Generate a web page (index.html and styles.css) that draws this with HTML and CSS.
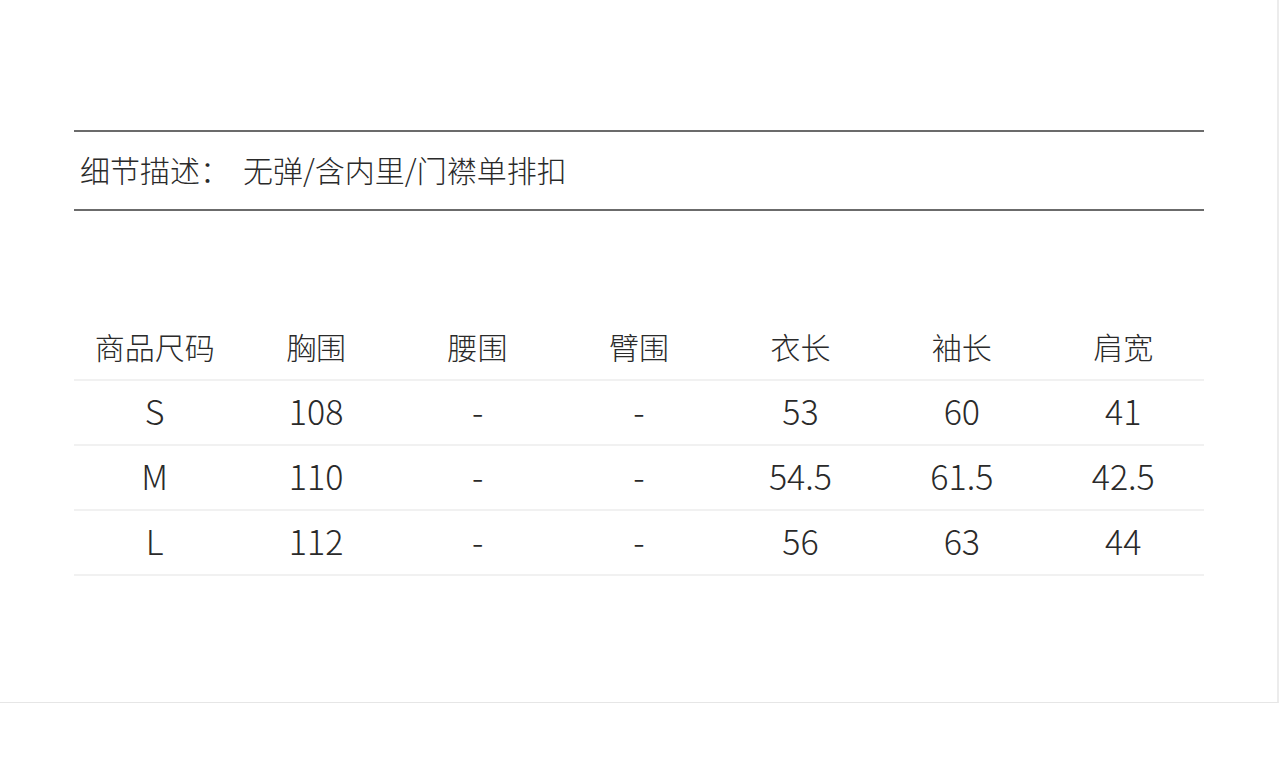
FILE: index.html
```html
<!DOCTYPE html>
<html lang="zh">
<head>
<meta charset="utf-8">
<title>尺码表</title>
<link rel="stylesheet" href="styles.css">
</head>
<body>
<div class="frame">
  <div class="detail">
    <span class="label">细节描述：</span><span class="value">无弹/含内里/门襟单排扣</span>
  </div>
  <div class="table">
    <div class="row head">
      <div class="cell">商品尺码</div>
      <div class="cell">胸围</div>
      <div class="cell">腰围</div>
      <div class="cell">臂围</div>
      <div class="cell">衣长</div>
      <div class="cell">袖长</div>
      <div class="cell">肩宽</div>
    </div>
    <div class="row">
      <div class="cell">S</div>
      <div class="cell">108</div>
      <div class="cell">-</div>
      <div class="cell">-</div>
      <div class="cell">53</div>
      <div class="cell">60</div>
      <div class="cell">41</div>
    </div>
    <div class="row">
      <div class="cell">M</div>
      <div class="cell">110</div>
      <div class="cell">-</div>
      <div class="cell">-</div>
      <div class="cell">54.5</div>
      <div class="cell">61.5</div>
      <div class="cell">42.5</div>
    </div>
    <div class="row">
      <div class="cell">L</div>
      <div class="cell">112</div>
      <div class="cell">-</div>
      <div class="cell">-</div>
      <div class="cell">56</div>
      <div class="cell">63</div>
      <div class="cell">44</div>
    </div>
  </div>
</div>
</body>
</html>
```

FILE: styles.css
```css
html, body {
  margin: 0;
  padding: 0;
  background: #ffffff;
}

body {
  font-family: "Noto Sans CJK SC", "Noto Sans", sans-serif;
  font-weight: 300;
  color: #2a2a2a;
}

.frame {
  box-sizing: border-box;
  width: 1279px;
  height: 703px;
  padding: 130px 73px 0 74px;
  border-right: 2px solid #ececec;
  border-bottom: 1px solid #e6e6e6;
}

.detail {
  border-top: 2px solid #6b6b6b;
  border-bottom: 2px solid #6b6b6b;
  height: 81px;
  box-sizing: border-box;
  display: flex;
  align-items: center;
  padding-left: 6px;
  padding-bottom: 4px;
  font-size: 30px;
  line-height: 1;
}

.detail .label {
  width: 163px;
}

.table {
  margin-top: 104px;
}

.row {
  display: grid;
  grid-template-columns: repeat(7, 1fr);
  height: 65px;
  border-bottom: 2px solid #f1f1f1;
  box-sizing: border-box;
  align-items: center;
}

.row.head {
  height: 66px;
}

.cell {
  text-align: center;
  font-size: 34px;
  line-height: 1;
  padding-bottom: 4px;
}

.head .cell {
  font-size: 30px;
  padding-bottom: 2px;
}
```
